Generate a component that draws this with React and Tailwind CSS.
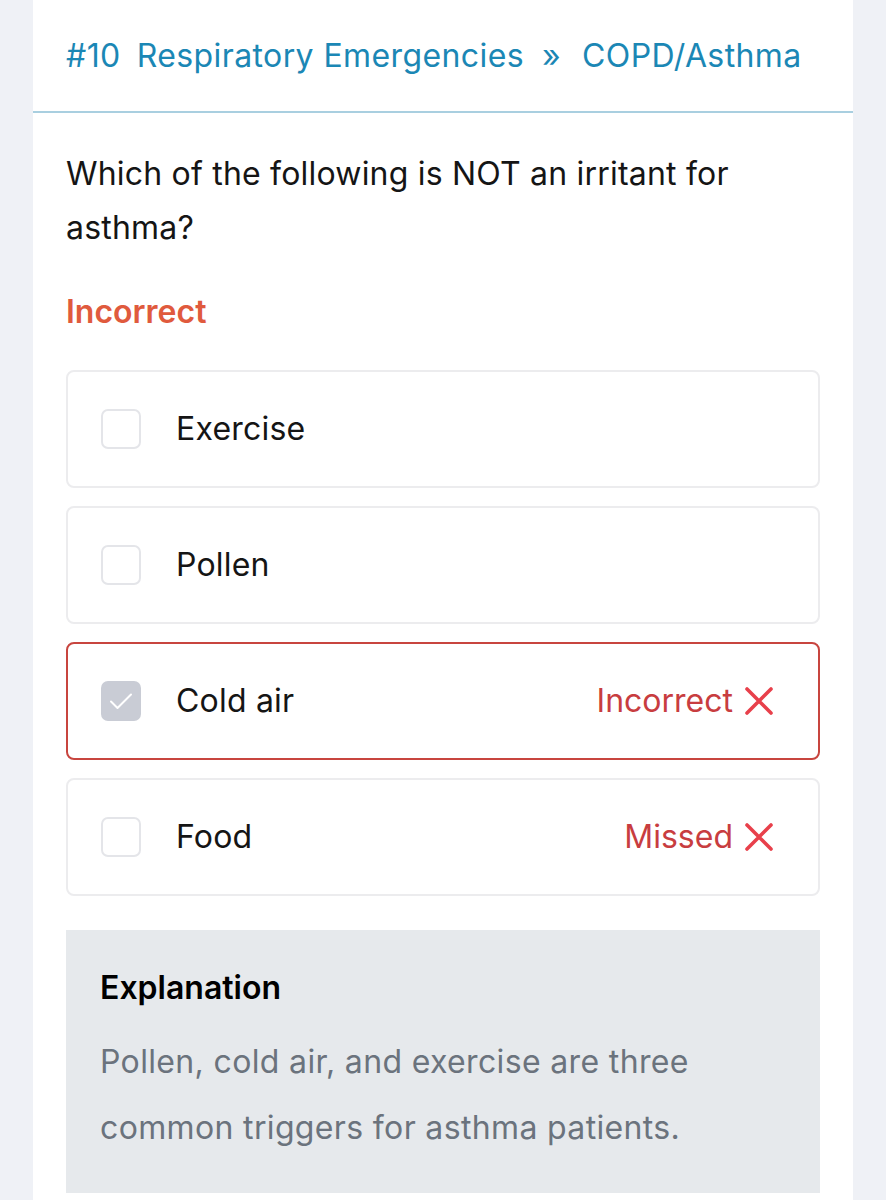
import React from "react";

function Check({ checked }) {
  if (checked) {
    return (
      <div className="w-[40px] h-[40px] rounded-[7px] bg-[#c9ccd5] flex items-center justify-center shrink-0">
        <svg width="28" height="28" viewBox="0 0 28 28" fill="none" stroke="white" strokeWidth="2" strokeLinecap="round" strokeLinejoin="round">
          <path d="M4 14.5l6.5 6.5L24 7.5" />
        </svg>
      </div>
    );
  }
  return <div className="w-[40px] h-[40px] rounded-[7px] border-2 border-[#e4e5e9] bg-white shrink-0" />;
}

function XIcon() {
  return (
    <svg width="32" height="32" viewBox="0 0 32 32" fill="none" stroke="#e8404b" strokeWidth="3.6" strokeLinecap="round">
      <path d="M4 4L28 28M28 4L4 28" />
    </svg>
  );
}

function Option({ label, checked, status, wrong }) {
  return (
    <div
      className={
        "h-[118px] rounded-[8px] border-2 flex items-center pl-[33px] pr-[43px] " +
        (wrong ? "border-[#c8453f]" : "border-[#ececee]")
      }
    >
      <Check checked={checked} />
      <span className="ml-[35px] text-[32px] text-[#151515] flex-1 tracking-[0.2px]">{label}</span>
      {status && (
        <span className="flex items-center gap-[10px] text-[32px] text-[#c83d40]">
          {status}
          <XIcon />
        </span>
      )}
    </div>
  );
}

export default function App() {
  return (
    <div className="min-h-screen bg-[#eff1f6] font-['Inter',sans-serif]">
      <div className="mx-[33px] bg-white min-h-[1200px]">
        <div className="h-[113px] flex items-center px-[33px] border-b-2 border-[#a9cfe0] text-[32px] text-[#1b87b5] tracking-[0.4px]">
          <span>#10</span>
          <span className="ml-[16px]">Respiratory Emergencies</span>
          <span className="ml-[18px]">»</span>
          <span className="ml-[21px]">COPD/Asthma</span>
        </div>
        <div className="px-[33px] pt-[34px]">
          <p className="text-[32px] leading-[54px] text-[#151515] tracking-[0.2px]">
            Which of the following is NOT an irritant for asthma?
          </p>
          <p className="mt-[37px] text-[32px] leading-[40px] font-semibold text-[#e05a3d]">Incorrect</p>
          <div className="mt-[38px] flex flex-col gap-[18px]">
            <Option label="Exercise" />
            <Option label="Pollen" />
            <Option label="Cold air" checked status="Incorrect" wrong />
            <Option label="Food" status="Missed" />
          </div>
          <div className="mt-[34px] bg-[#e6e9ec] px-[34px] pt-[36px] pb-[32px]">
            <h3 className="text-[32px] leading-[44px] font-semibold text-black">Explanation</h3>
            <p className="mt-[19px] text-[32px] leading-[66px] text-[#6b737d] tracking-[0.35px]">
              Pollen, cold air, and exercise are three common triggers for asthma patients.
            </p>
          </div>
        </div>
      </div>
    </div>
  );
}
